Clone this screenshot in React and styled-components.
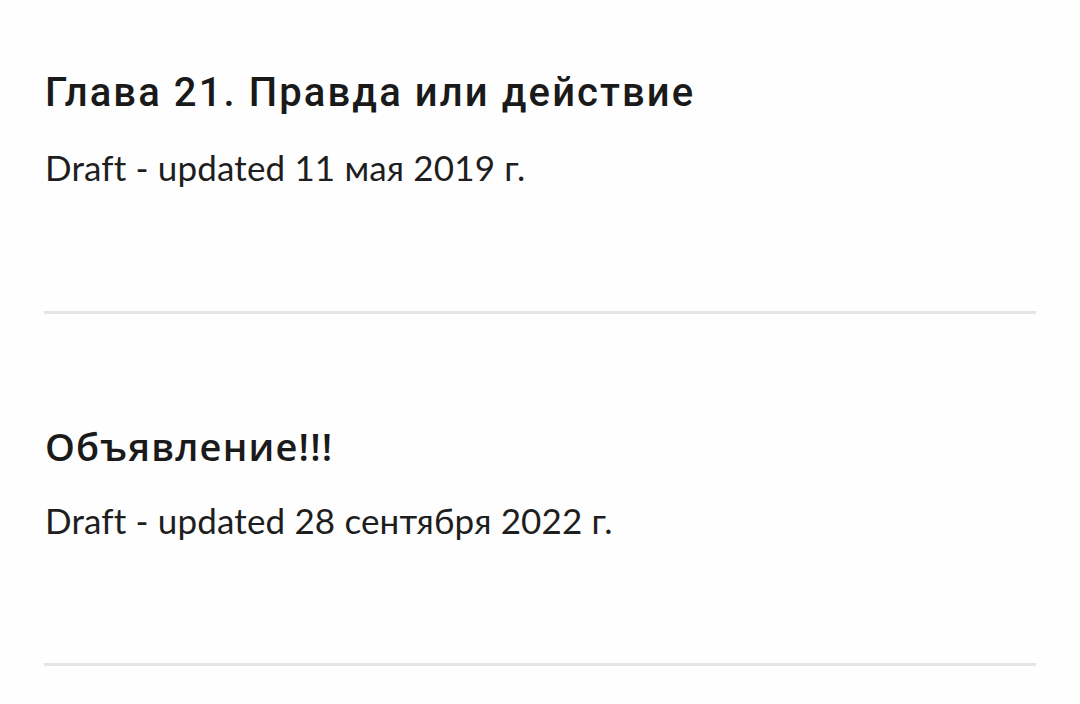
import React from 'react';
import styled, { createGlobalStyle } from 'styled-components';

const GlobalStyle = createGlobalStyle`
  html, body {
    margin: 0;
    padding: 0;
    background: #fefefe;
  }
  body {
    font-family: Roboto, "Noto Sans", sans-serif;
    color: #1c1c1c;
  }
`;

const Page = styled.div`
  width: 1080px;
  height: 704px;
  overflow: hidden;
  background: #fefefe;
`;

const List = styled.ul`
  list-style: none;
  margin: 0;
  padding: 0 44px;
`;

const Item = styled.li`
  display: flex;
  flex-direction: column;
  gap: 29px;
  padding: 108px 0 122px;
  border-bottom: 3px solid #e4e4e4;

  &:first-child {
    padding-top: 69px;
    padding-bottom: 123px;
  }
`;

const Title = styled.h2`
  margin: 0;
  font-family: ${({ $alt }) =>
    $alt ? '"Open Sans", "Noto Sans", sans-serif' : 'Roboto, "Noto Sans", sans-serif'};
  font-size: ${({ $alt }) => ($alt ? '38px' : '40px')};
  font-weight: ${({ $alt }) => ($alt ? 600 : 500)};
  letter-spacing: ${({ $alt }) => ($alt ? '1.2px' : '2.1px')};
  line-height: 48px;
  color: #1a1a1a;
  padding-left: 1px;
`;

const Meta = styled.p`
  margin: 0;
  font-family: Lato, "Open Sans", sans-serif;
  font-size: 35px;
  line-height: 42px;
  letter-spacing: 0.15px;
  color: #1e1e1e;
  padding-left: 1px;
`;

const drafts = [
  { id: 1, title: 'Глава 21. Правда или действие', date: '11 мая 2019 г.' },
  { id: 2, title: 'Объявление!!!', date: '28 сентября 2022 г.', alt: true },
];

export default function App() {
  return (
    <Page>
      <GlobalStyle />
      <List>
        {drafts.map((d) => (
          <Item key={d.id}>
            <Title $alt={d.alt}>{d.title}</Title>
            <Meta>Draft - updated {d.date}</Meta>
          </Item>
        ))}
      </List>
    </Page>
  );
}
